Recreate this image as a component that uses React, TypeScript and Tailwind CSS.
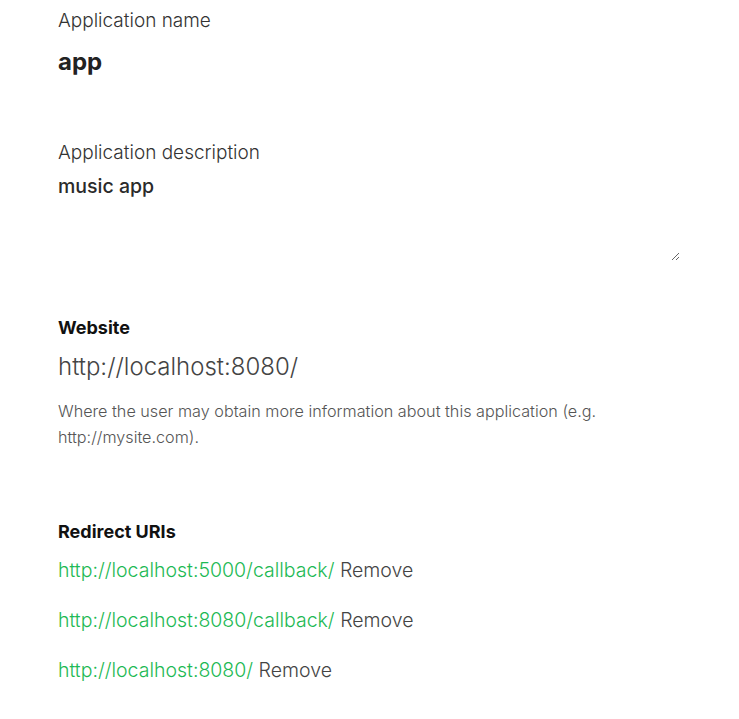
export default function App() {
  const uris = [
    "http://localhost:5000/callback/",
    "http://localhost:8080/callback/",
    "http://localhost:8080/",
  ];

  return (
    <div className="min-h-screen bg-white text-[#333] font-['Inter',sans-serif]">
      <div className="pl-[58px] pr-[58px] pt-[8px] w-[739px]">
        {/* Application name */}
        <div>
          <label className="block text-[19px] leading-[26px] font-light text-[#333]">Application name</label>
          <input
            defaultValue="app"
            className="block w-[622px] mt-[14px] text-[24px] leading-[28px] font-bold text-[#222] border-0 outline-none bg-transparent p-0"
          />
        </div>

        {/* Application description */}
        <div className="mt-[64px]">
          <label className="block text-[19px] leading-[26px] font-light text-[#333]">Application description</label>
          <textarea
            defaultValue="music app"
            className="block w-[622px] h-[87px] mt-[8px] text-[19.5px] leading-[24px] font-medium text-[#2a2a2a] border-0 outline-none bg-transparent p-0 resize-y"
          />
        </div>

        {/* Website */}
        <div className="mt-[55px]">
          <label className="block text-[18px] leading-[24px] font-bold text-[#111]">Website</label>
          <div className="mt-[12px] text-[24px] leading-[30px] font-light text-[#444]">http://localhost:8080/</div>
          <p className="mt-[16px] text-[16.2px] leading-[26px] font-light text-[#555] max-w-[600px]">
            Where the user may obtain more information about this application (e.g. http://mysite.com).
          </p>
        </div>

        {/* Redirect URIs */}
        <div className="mt-[70px]">
          <label className="block text-[18px] leading-[24px] font-bold text-[#111]">Redirect URIs</label>
          <ul className="mt-[14px] flex flex-col gap-[26px]">
            {uris.map((u) => (
              <li key={u} className="text-[19.5px] leading-[24px]">
                <a className="text-[#1db954] font-light">{u}</a>{" "}
                <span className="text-[#444] font-light">Remove</span>
              </li>
            ))}
          </ul>
        </div>
      </div>
    </div>
  );
}
